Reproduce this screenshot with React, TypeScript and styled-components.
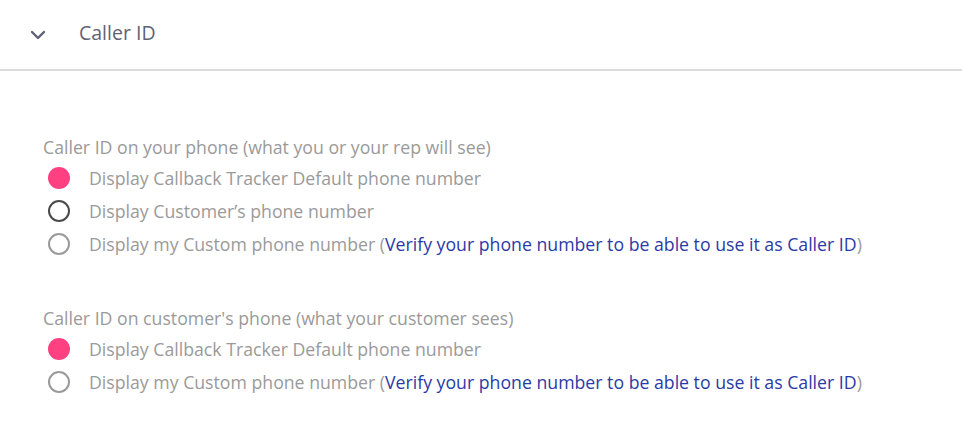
import React from 'react';
import styled, { createGlobalStyle } from 'styled-components';

const GlobalStyle = createGlobalStyle`
  html, body {
    margin: 0;
    padding: 0;
    background: #ffffff;
    font-family: "Open Sans", Lato, sans-serif;
  }
`;

type RadioState = 'checked' | 'focused' | 'idle';

interface OptionProps {
  state: RadioState;
  label: string;
  withVerifyLink?: boolean;
}

const Option: React.FC<OptionProps> = ({ state, label, withVerifyLink }) => (
  <OptionRow>
    <RadioCircle $state={state} />
    <OptionLabel>
      {label}
      {withVerifyLink && (
        <>
          {' ('}
          <VerifyLink>Verify your phone number to be able to use it as Caller ID</VerifyLink>
          {')'}
        </>
      )}
    </OptionLabel>
  </OptionRow>
);

export default function App() {
  return (
    <>
      <GlobalStyle />
      <Panel>
        <Header>
          <Chevron width="16" height="10" viewBox="0 0 16 10">
            <path d="M2 2 L8 8 L14 2" fill="none" stroke="#5d6175" strokeWidth="2.4" strokeLinecap="round" strokeLinejoin="round" />
          </Chevron>
          <HeaderTitle>Caller ID</HeaderTitle>
        </Header>
        <Body>
          <Group>
            <GroupLabel>Caller ID on your phone (what you or your rep will see)</GroupLabel>
            <Option state="checked" label="Display Callback Tracker Default phone number" />
            <Option state="focused" label="Display Customer’s phone number" />
            <Option state="idle" label="Display my Custom phone number" withVerifyLink />
          </Group>
          <Group>
            <GroupLabel>Caller ID on customer's phone (what your customer sees)</GroupLabel>
            <Option state="checked" label="Display Callback Tracker Default phone number" />
            <Option state="idle" label="Display my Custom phone number" withVerifyLink />
          </Group>
        </Body>
      </Panel>
    </>
  );
}

const Panel = styled.div`
  width: 962px;
  height: 436px;
  background: #fff;
`;

const Header = styled.div`
  height: 69px;
  display: flex;
  align-items: center;
  padding-left: 30px;
  border-bottom: 2px solid #dcdcdc;
  box-sizing: content-box;
`;

const Chevron = styled.svg`
  width: 16px;
  height: 10px;
  margin-top: 1px;
`;

const HeaderTitle = styled.span`
  margin-left: 33px;
  font-size: 19.5px;
  color: #5f6377;
  margin-top: -4px;
`;

const Body = styled.div`
  padding: 65px 0 0 43px;
  display: flex;
  flex-direction: column;
  gap: 47px;
`;

const Group = styled.div`
  display: flex;
  flex-direction: column;
`;

const GroupLabel = styled.div`
  font-size: 17.7px;
  line-height: 22px;
  color: #9a9a9a;
  margin-bottom: 3px;
`;

const OptionRow = styled.div`
  display: flex;
  align-items: center;
  height: 33px;
`;

const RadioCircle = styled.span<{ $state: RadioState }>`
  width: 22px;
  height: 22px;
  margin-left: 5px;
  border-radius: 50%;
  box-sizing: border-box;
  flex-shrink: 0;
  background: ${(p) => (p.$state === 'checked' ? '#ff4081' : 'transparent')};
  border: ${(p) =>
    p.$state === 'checked'
      ? 'none'
      : p.$state === 'focused'
      ? '2px solid #4a4a4a'
      : '2px solid #9a9a9a'};
`;

const OptionLabel = styled.span`
  margin-left: 19px;
  font-size: 17.7px;
  color: #9a9a9a;
`;

const VerifyLink = styled.a`
  color: #2b3aa6;
  cursor: pointer;
`;
